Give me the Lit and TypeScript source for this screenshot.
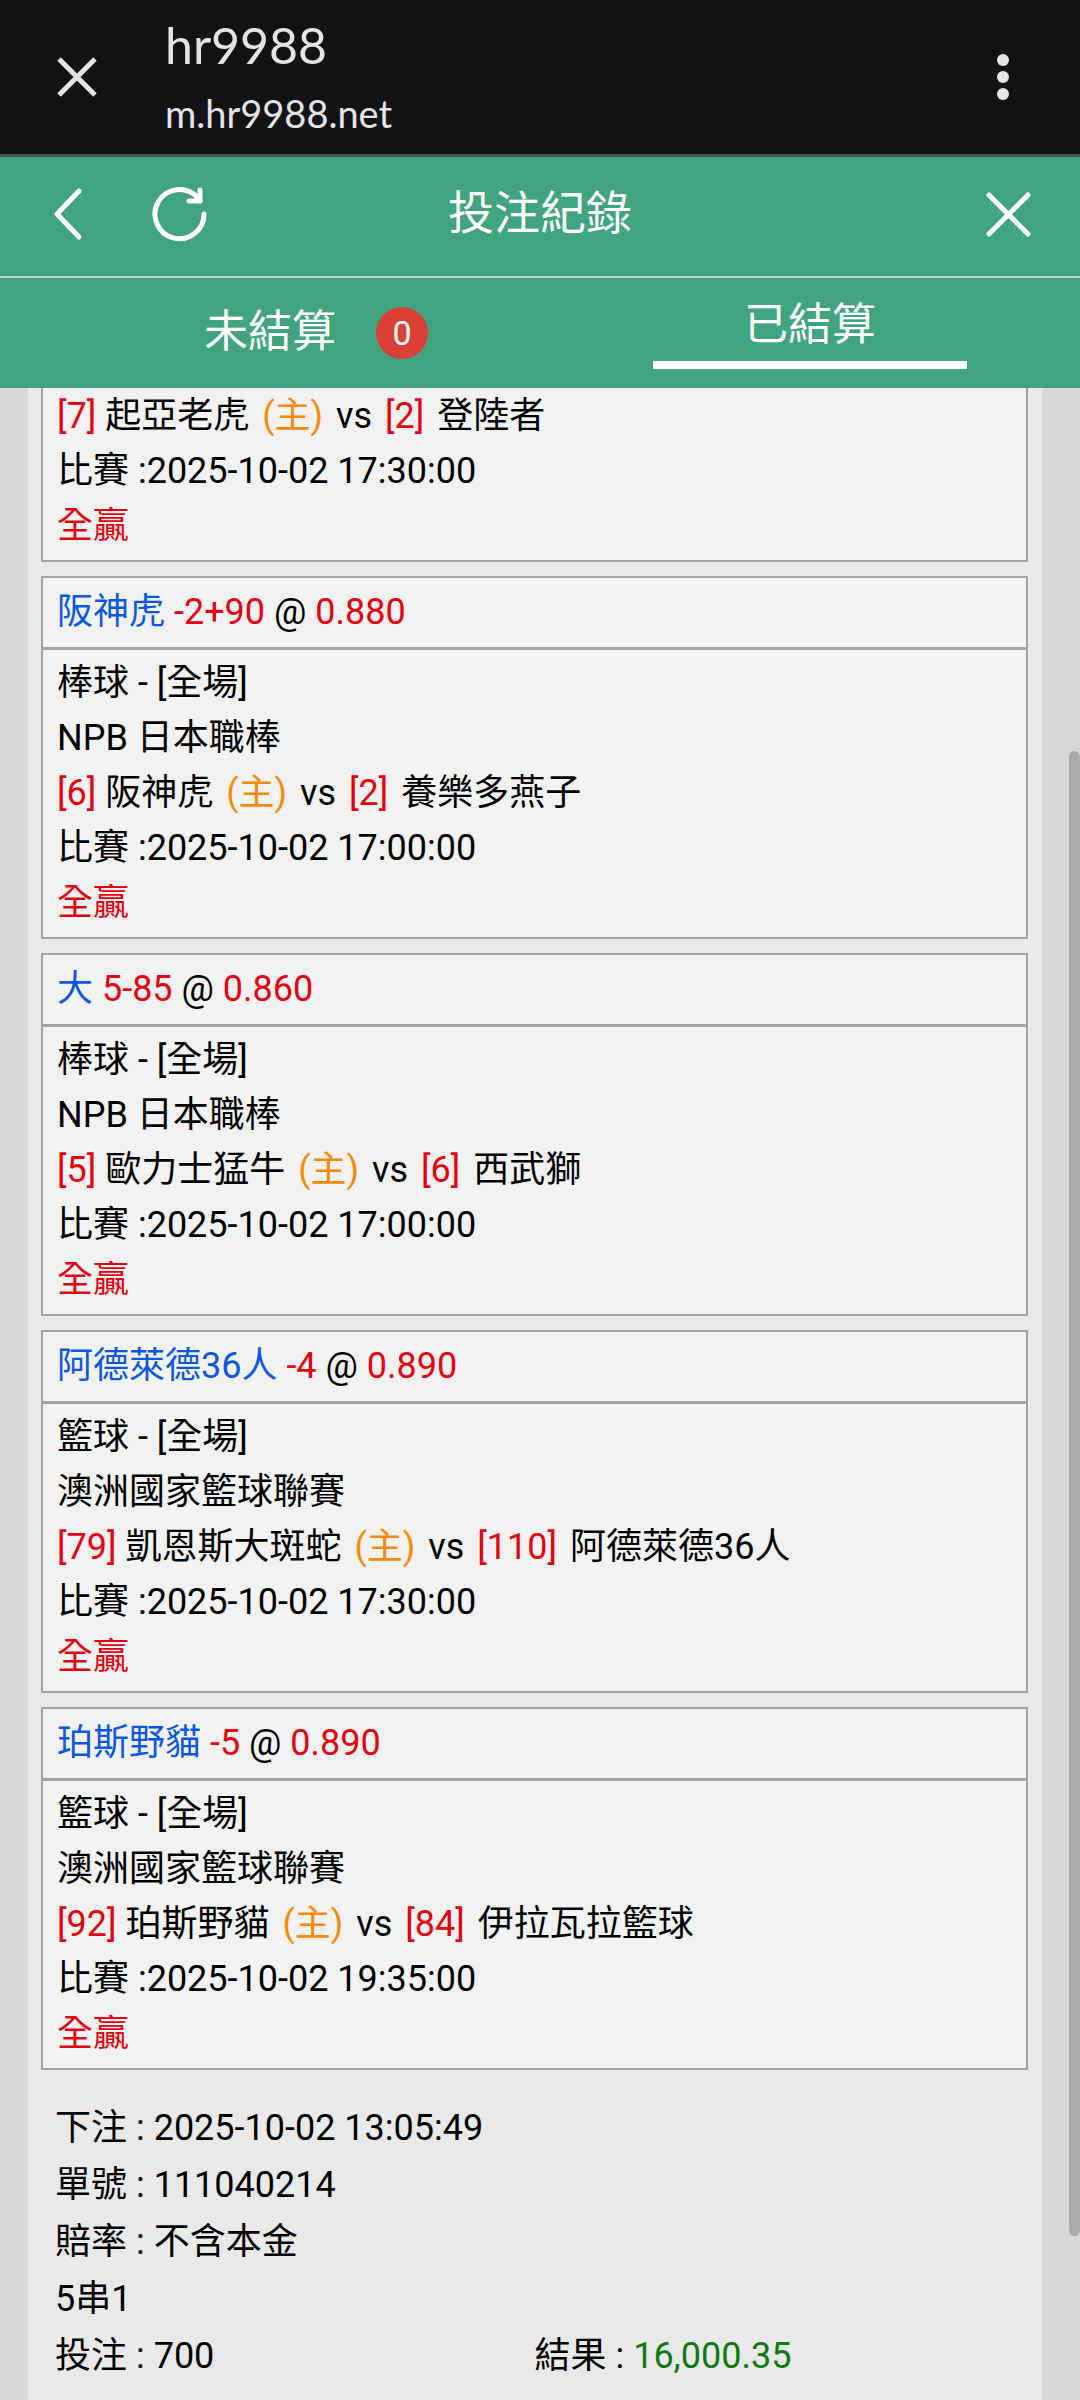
import { LitElement, html, css, nothing } from "lit";
import { customElement, property, state } from "lit/decorators.js";

interface Team {
  score: number;
  name: string;
}

interface Bet {
  pick?: string;
  line?: string;
  odds?: string;
  sport?: string;
  league?: string;
  home: Team;
  away: Team;
  time: string;
  result: string;
}

const BETS: Bet[] = [
  {
    home: { score: 7, name: "起亞老虎" },
    away: { score: 2, name: "登陸者" },
    time: "2025-10-02 17:30:00",
    result: "全贏",
  },
  {
    pick: "阪神虎",
    line: "-2+90",
    odds: "0.880",
    sport: "棒球 - [全場]",
    league: "NPB 日本職棒",
    home: { score: 6, name: "阪神虎" },
    away: { score: 2, name: "養樂多燕子" },
    time: "2025-10-02 17:00:00",
    result: "全贏",
  },
  {
    pick: "大",
    line: "5-85",
    odds: "0.860",
    sport: "棒球 - [全場]",
    league: "NPB 日本職棒",
    home: { score: 5, name: "歐力士猛牛" },
    away: { score: 6, name: "西武獅" },
    time: "2025-10-02 17:00:00",
    result: "全贏",
  },
  {
    pick: "阿德萊德36人",
    line: "-4",
    odds: "0.890",
    sport: "籃球 - [全場]",
    league: "澳洲國家籃球聯賽",
    home: { score: 79, name: "凱恩斯大斑蛇" },
    away: { score: 110, name: "阿德萊德36人" },
    time: "2025-10-02 17:30:00",
    result: "全贏",
  },
  {
    pick: "珀斯野貓",
    line: "-5",
    odds: "0.890",
    sport: "籃球 - [全場]",
    league: "澳洲國家籃球聯賽",
    home: { score: 92, name: "珀斯野貓" },
    away: { score: 84, name: "伊拉瓦拉籃球" },
    time: "2025-10-02 19:35:00",
    result: "全贏",
  },
];

@customElement("bet-card")
export class BetCard extends LitElement {
  @property({ attribute: false }) bet!: Bet;

  static styles = css`
    :host {
      display: block;
    }
    .card {
      border: 2px solid #a3a3a3;
      background: #f2f2f2;
      line-height: 55px;
    }
    .card.partial {
      border-top: none;
    }
    .pick {
      margin: 0;
      padding: 7px 14px;
      border-bottom: 3px solid #a3a3a3;
      font-size: inherit;
      font-weight: inherit;
    }
    .body {
      padding: 6px 14px;
    }
    .partial .body {
      padding-top: 1px;
    }
    .body p {
      margin: 0;
    }
    .blue {
      color: #0b57e0;
    }
    .red {
      color: #e3000f;
    }
    .orange {
      color: #f58a07;
    }
    .spaced {
      margin: 0 4px;
    }
  `;

  render() {
    const b = this.bet;
    return html`<article class="card ${b.pick ? "" : "partial"}">
      ${b.pick
        ? html`<h2 class="pick">
            <span class="blue">${b.pick}</span> <span class="red">${b.line}</span> @
            <span class="red">${b.odds}</span>
          </h2>`
        : nothing}
      <div class="body">
        ${b.sport ? html`<p>${b.sport}</p>` : nothing} ${b.league ? html`<p>${b.league}</p>` : nothing}
        <p>
          <span class="red">[${b.home.score}]</span> ${b.home.name} <span class="orange spaced">(主)</span> vs
          <span class="red spaced">[${b.away.score}]</span> ${b.away.name}
        </p>
        <p>比賽 :${b.time}</p>
        <p class="red">${b.result}</p>
      </div>
    </article>`;
  }
}

@customElement("app-root")
export class AppRoot extends LitElement {
  @state() private tab: "open" | "settled" = "settled";

  static styles = css`
    :host {
      display: block;
      font-family: Roboto, "Noto Sans CJK TC", sans-serif;
      font-size: 36px;
      color: #000;
    }
    .page {
      position: relative;
      display: flex;
      flex-direction: column;
      min-height: 100vh;
      background: #d8d8d8;
    }
    button {
      border: none;
      padding: 0;
      background: none;
      color: inherit;
      font: inherit;
    }
    svg {
      display: block;
      fill: none;
      stroke: currentColor;
      stroke-width: 5;
      stroke-linecap: round;
      stroke-linejoin: round;
    }
    .browser {
      display: flex;
      align-items: center;
      height: 154px;
      padding: 0 47px;
      border-bottom: 3px solid #45564f;
      background: #131316;
      color: #e4e4e6;
      font-family: Lato, sans-serif;
    }
    .browser .site {
      flex: 1;
      margin-left: 58px;
    }
    .site p {
      margin: 0;
    }
    .site .name {
      font-size: 50px;
      line-height: 72px;
    }
    .site .url {
      font-size: 38px;
      line-height: 64px;
    }
    .dots {
      fill: currentColor;
      stroke: none;
    }
    .sharp {
      stroke-linecap: butt;
    }
    .top {
      display: grid;
      grid-template-columns: 1fr auto 1fr;
      align-items: center;
      height: 116px;
      padding: 0 41px 3px;
      border-bottom: 2px solid #c3d3cc;
      background: #41a380;
      color: #fff;
    }
    .top .left {
      display: flex;
      gap: 52px;
      padding-left: 9px;
    }
    .top .right {
      display: flex;
      justify-content: flex-end;
    }
    .top h1 {
      margin: 0;
      padding-bottom: 4px;
      font-size: 46px;
      line-height: 60px;
      font-weight: 400;
    }
    .tabs {
      display: grid;
      grid-template-columns: 1fr 1fr;
      height: 110px;
      background: #41a380;
      color: #fff;
      font-size: 44px;
      line-height: 60px;
    }
    .tab {
      display: flex;
      flex-direction: column;
      align-items: center;
      justify-content: center;
      padding-bottom: 3px;
    }
    .label {
      position: relative;
    }
    .tab.on::after {
      content: "";
      width: 58%;
      height: 8px;
      margin-top: 6px;
      background: #fff;
    }
    .badge {
      position: absolute;
      left: calc(100% + 40px);
      top: 5px;
      width: 52px;
      height: 52px;
      border-radius: 50%;
      background: #db4037;
      font-size: 34px;
      line-height: 52px;
      text-align: center;
    }
    .panel {
      flex: 1;
      display: flex;
      flex-direction: column;
      gap: 14px;
      margin: 0 38px 0 28px;
      padding: 0 14px 12px 13px;
      background: #e9e9e9;
    }
    .summary {
      display: grid;
      grid-template-columns: 1fr 1fr;
      margin: 16px 0 0;
      padding: 0 14px;
      line-height: 57px;
    }
    .wide {
      grid-column: 1 / -1;
    }
    .summary div {
      display: flex;
      gap: 9px;
    }
    dt,
    dd {
      margin: 0;
    }
    .win {
      color: #0b7a12;
    }
    .scrollbar {
      position: absolute;
      right: 0;
      top: 751px;
      width: 11px;
      height: 1485px;
      border-radius: 6px;
      background: #ababab;
    }
  `;

  render() {
    return html`<div class="page">
      <header class="browser">
        <button aria-label="關閉分頁">
          <svg class="sharp" width="60" height="60" viewBox="0 0 60 60">
            <path d="M12 12L48 48M48 12L12 48" />
          </svg>
        </button>
        <div class="site">
          <p class="name">hr9988</p>
          <p class="url">m.hr9988.net</p>
        </div>
        <button aria-label="更多">
          <svg class="dots" width="60" height="60" viewBox="0 0 60 60">
            <circle cx="30" cy="13" r="6" />
            <circle cx="30" cy="30" r="6" />
            <circle cx="30" cy="47" r="6" />
          </svg>
        </button>
      </header>
      <nav class="top">
        <div class="left">
          <button aria-label="返回">
            <svg width="50" height="60" viewBox="0 0 50 60">
              <path d="M29 6L7 29L29 52" />
            </svg>
          </button>
          <button aria-label="重新整理">
            <svg width="56" height="60" viewBox="0 0 56 60">
              <path d="M52 29A24.500 24.500 0 1 1 45 12L48 16" />
              <path d="M48 5V16H37" />
            </svg>
          </button>
        </div>
        <h1>投注紀錄</h1>
        <div class="right">
          <button aria-label="關閉">
            <svg width="60" height="60" viewBox="0 0 60 60">
              <path d="M10 10L49 49M49 10L10 49" />
            </svg>
          </button>
        </div>
      </nav>
      <div class="tabs" role="tablist">
        <button
          class="tab ${this.tab === "open" ? "on" : ""}"
          role="tab"
          aria-selected=${this.tab === "open"}
          @click=${() => (this.tab = "open")}
        >
          <span class="label">未結算<span class="badge">0</span></span>
        </button>
        <button
          class="tab ${this.tab === "settled" ? "on" : ""}"
          role="tab"
          aria-selected=${this.tab === "settled"}
          @click=${() => (this.tab = "settled")}
        >
          <span class="label">已結算</span>
        </button>
      </div>
      <main class="panel">
        ${BETS.map((bet) => html`<bet-card .bet=${bet}></bet-card>`)}
        <dl class="summary">
          <div class="wide"><dt>下注 :</dt><dd>2025-10-02 13:05:49</dd></div>
          <div class="wide"><dt>單號 :</dt><dd>111040214</dd></div>
          <div class="wide"><dt>賠率 :</dt><dd>不含本金</dd></div>
          <div class="wide"><dt>5串1</dt></div>
          <div><dt>投注 :</dt><dd>700</dd></div>
          <div><dt>結果 :</dt><dd class="win">16,000.35</dd></div>
        </dl>
      </main>
      <div class="scrollbar"></div>
    </div>`;
  }
}
